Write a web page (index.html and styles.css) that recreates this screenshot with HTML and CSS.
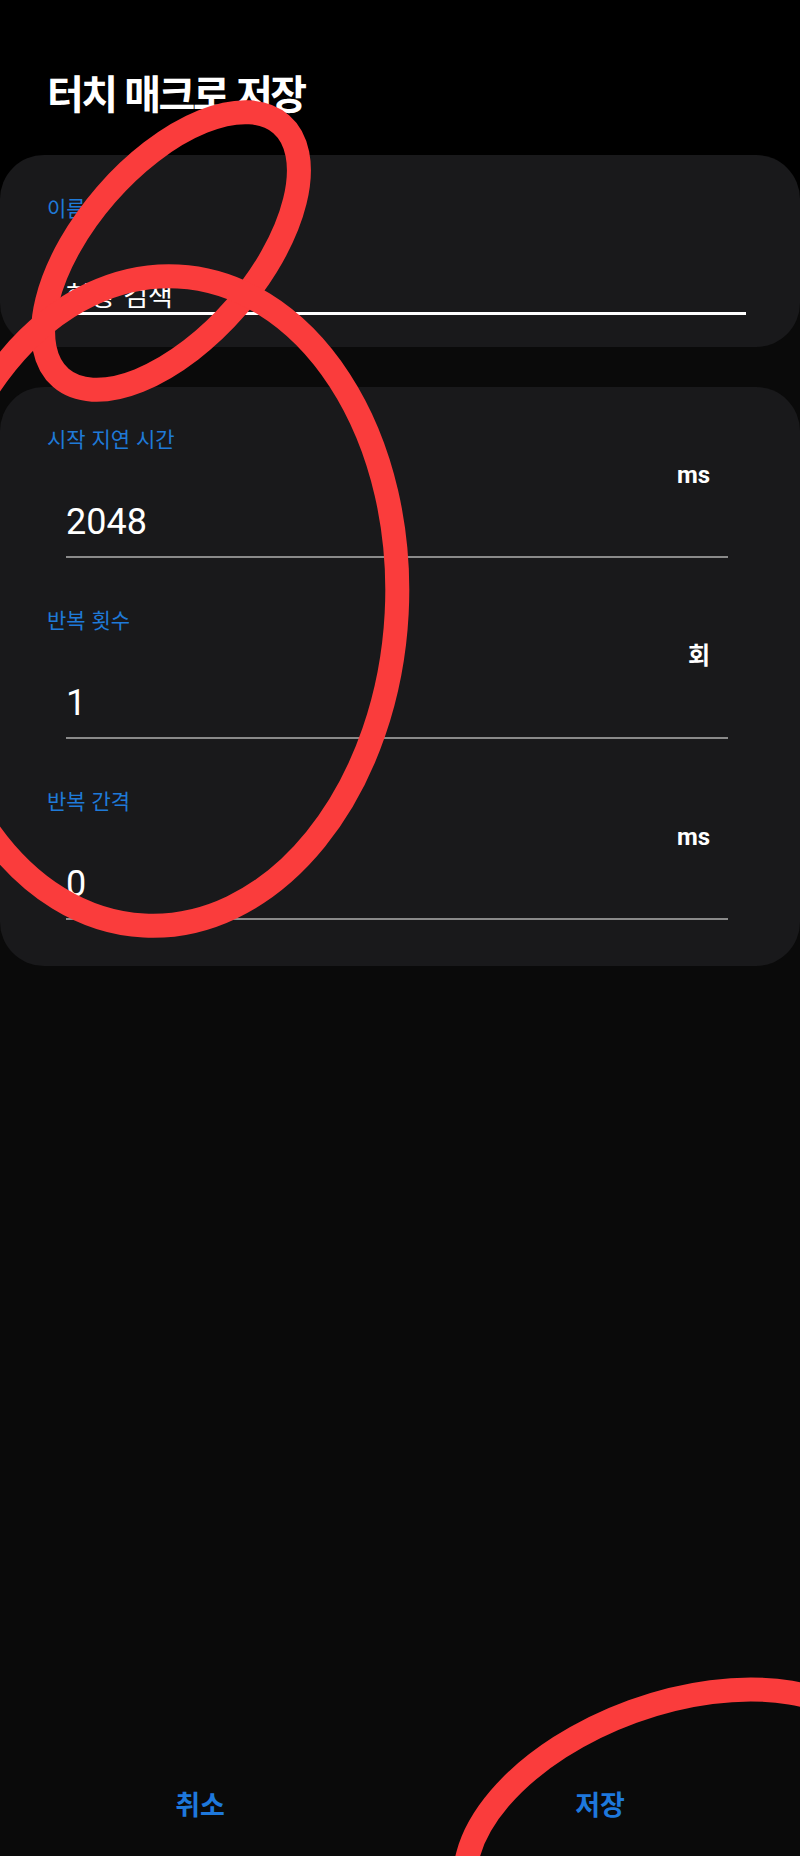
FILE: index.html
```html
<!DOCTYPE html>
<html lang="ko">
<head>
<meta charset="utf-8">
<title>터치 매크로 저장</title>
<link rel="stylesheet" href="styles.css">
</head>
<body>
<div class="page">
  <header class="header">
    <h1 class="title">터치 매크로 저장</h1>
  </header>

  <section class="name-section">
    <div class="card card-name">
      <div class="label">이름</div>
      <div class="field field-name">
        <div class="value value-name">현황 검색</div>
      </div>
    </div>
  </section>

  <div class="card card-settings">
    <div class="row">
      <div class="label">시작 지연 시간</div>
      <div class="field">
        <div class="unit">ms</div>
        <div class="value">2048</div>
      </div>
    </div>
    <div class="row">
      <div class="label">반복 횟수</div>
      <div class="field">
        <div class="unit">회</div>
        <div class="value">1</div>
      </div>
    </div>
    <div class="row">
      <div class="label">반복 간격</div>
      <div class="field">
        <div class="unit">ms</div>
        <div class="value">0</div>
      </div>
    </div>
  </div>

  <footer class="actions">
    <button class="action">취소</button>
    <button class="action">저장</button>
  </footer>

  <svg class="marks" width="800" height="1856" viewBox="0 0 800 1856" aria-hidden="true">
    <g fill="none" stroke="#fa3c3c" stroke-width="24">
      <ellipse cx="171" cy="251" rx="168" ry="86" transform="rotate(-49 171 251)"/>
      <ellipse cx="161" cy="601" rx="236" ry="325" transform="rotate(3 161 601)"/>
      <ellipse cx="675" cy="1828" rx="219" ry="124" transform="rotate(-20 675 1828)"/>
    </g>
  </svg>
</div>
</body>
</html>
```

FILE: styles.css
```css
html, body {
  margin: 0;
  padding: 0;
  background: #0a0a0a;
}

body {
  font-family: "Noto Sans CJK KR", "Noto Sans", sans-serif;
  color: #ffffff;
  overflow: hidden;
}

.page {
  position: relative;
  width: 800px;
  min-height: 1856px;
  display: flex;
  flex-direction: column;
  background: #0a0a0a;
}

.header {
  background: #000000;
  padding: 68px 0 39px 47px;
}

.title {
  margin: 0;
  font-size: 40px;
  line-height: 48px;
  font-weight: 700;
  letter-spacing: -2.5px;
  color: #ffffff;
}

.name-section {
  background: linear-gradient(#000000 0 50%, #0a0a0a 50% 100%);
  margin-bottom: 40px;
}

.card {
  background: #19191b;
  border-radius: 44px;
}

.card-name {
  padding: 38px 54px 32px 47px;
}

.card-settings {
  padding: 37px 72px 46px 47px;
}

.label {
  font-size: 21px;
  line-height: 28px;
  color: #1f7ad8;
}

.field {
  margin-left: 19px;
  border-bottom: 2px solid #8a8a8a;
}

.field-name {
  margin-top: 56px;
  border-bottom: 3px solid #ffffff;
}

.value {
  font-family: "Roboto", "Noto Sans CJK KR", sans-serif;
  font-size: 36px;
  line-height: 44px;
  margin-top: 10px;
  padding-bottom: 12px;
  color: #ffffff;
}

.value-name {
  font-family: "Noto Sans CJK KR", sans-serif;
  font-size: 27px;
  line-height: 35px;
  margin-top: 0;
  padding-bottom: 0;
}

.unit {
  font-family: "Roboto", "Noto Sans CJK KR", sans-serif;
  font-weight: 700;
  font-size: 24px;
  line-height: 30px;
  margin-top: 8px;
  text-align: right;
  padding-right: 18px;
  color: #ffffff;
}

.row + .row {
  margin-top: 47px;
}

.actions {
  margin-top: auto;
  height: 104px;
  display: flex;
}

.action {
  flex: 1;
  background: none;
  border: none;
  padding: 0;
  font-family: "Noto Sans CJK KR", sans-serif;
  font-size: 27px;
  font-weight: 700;
  line-height: 104px;
  color: #1e78dc;
}

.marks {
  position: absolute;
  top: 0;
  left: 0;
  pointer-events: none;
}
```
